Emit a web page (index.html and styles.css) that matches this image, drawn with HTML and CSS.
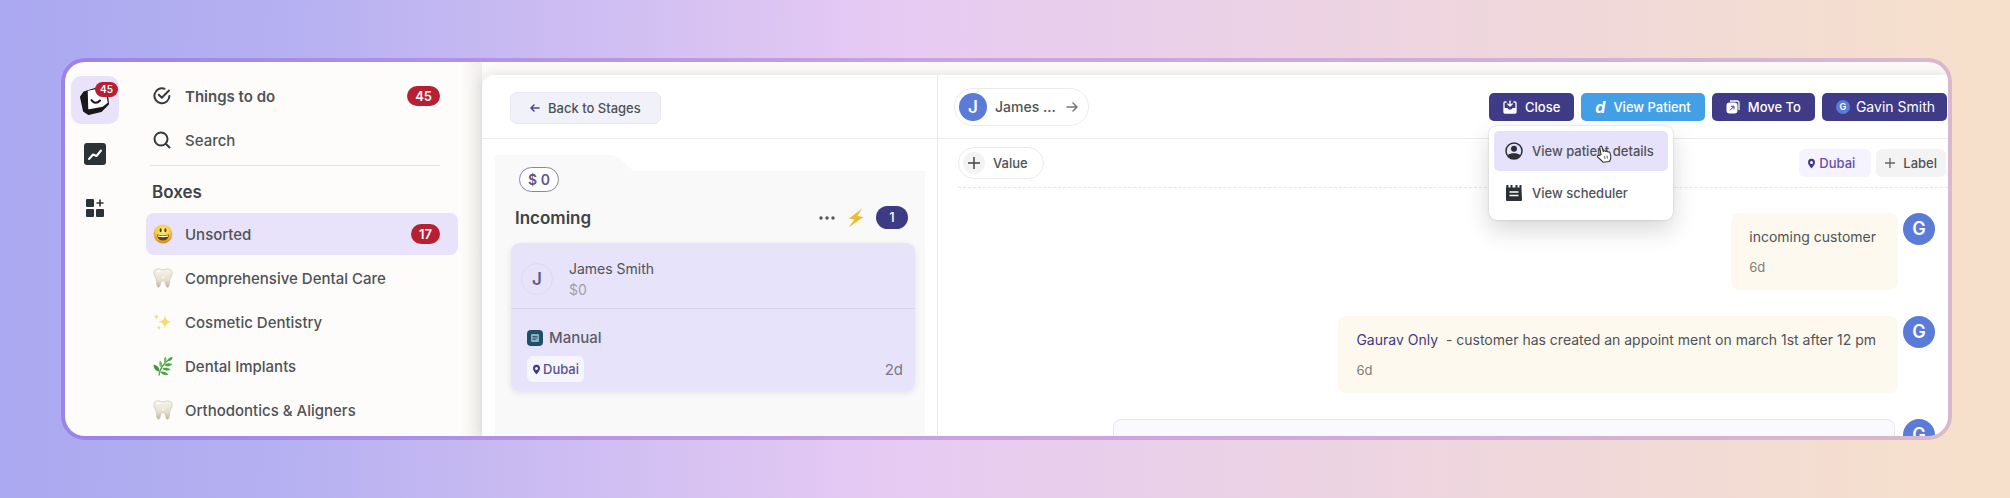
FILE: index.html
```html
<!DOCTYPE html>
<html lang="en">
<head>
  <meta charset="UTF-8">
  <meta name="viewport" content="width=device-width, initial-scale=1.0">
  <title>Inbox - Incoming</title>
  <link rel="stylesheet" href="styles.css">
</head>
<body>
  <svg class="sprite" aria-hidden="true">
    <defs>
      <radialGradient id="g-smile" cx="50%" cy="35%" r="65%">
        <stop offset="0" stop-color="#fff07a"/><stop offset=".6" stop-color="#f6c945"/><stop offset="1" stop-color="#c98a1c"/>
      </radialGradient>
      <linearGradient id="g-tooth" x1="0" y1="0" x2="0" y2="1">
        <stop offset="0" stop-color="#f7f4ec"/><stop offset=".6" stop-color="#e6e0d2"/><stop offset="1" stop-color="#bfb29c"/>
      </linearGradient>
    </defs>
    <symbol id="smile" viewBox="0 0 20 20">
      <circle cx="10" cy="10" r="9.4" fill="url(#g-smile)"/>
      <ellipse cx="7.6" cy="6.2" rx="1" ry="2" fill="#4a3410"/>
      <ellipse cx="12.4" cy="6.2" rx="1" ry="2" fill="#4a3410"/>
      <path d="M3.800 10.600q6.200 1.400 12.400 0q-.8 6-6.200 6t-6.200-6z" fill="#6b3f12"/>
      <path d="M4.600 11.300q5.400 1 10.800 0l-.6 1.500q-4.800.8-9.600 0z" fill="#fff"/>
    </symbol>
    <symbol id="tooth" viewBox="0 0 20 20">
      <path d="M5.200.8C2.200.8.6 3 .9 5.700c.3 2.200 1.700 3.500 2.200 5.700.5 2.500.4 7.900 2.400 7.900 2.200 0 1.400-6.700 4.500-6.700s2.300 6.700 4.500 6.700c2 0 1.900-5.400 2.400-7.900.5-2.200 1.900-3.500 2.200-5.700.3-2.700-1.300-4.900-4.300-4.900-2 0-3 1-4.800 1S7.200.8 5.200.8z" fill="url(#g-tooth)" stroke="#cfc5b2" stroke-width=".7"/>
      <path d="M4 3.500c1.300-1 2.800-.6 3.600.2M9 9.500h2" fill="none" stroke="#fff" stroke-width="1.200"/>
    </symbol>
    <symbol id="sparkles" viewBox="0 0 20 20">
      <path d="M12 3c.8 4.500 2 5.900 6.500 6.900-4.500 1-5.700 2.400-6.500 6.900-.8-4.500-2-5.900-6.500-6.900C10 8.900 11.200 7.500 12 3z" fill="#f5dc72"/>
      <path d="M3.400 1.500c.4 2.200.9 2.800 2.900 3.300-2 .5-2.500 1.100-2.900 3.300C3 5.900 2.500 5.300.5 4.800c2-.5 2.500-1.100 2.900-3.300zM6 13c.3 1.900.8 2.400 2.700 2.800-1.900.4-2.400.9-2.700 2.800-.3-1.900-.8-2.400-2.700-2.800C5.200 15.400 5.700 14.900 6 13z" fill="#f0dc98"/>
    </symbol>
    <symbol id="herb" viewBox="0 0 20 20">
      <path d="M6 19.500C6.500 14 10 8 16 3.500" fill="none" stroke="#4f9e46" stroke-width="1.300"/>
      <path d="M6.300 15.500C2.500 15.500.8 12.500.6 8.600 4.300 9.500 6.700 11.800 6.300 15.500z" fill="#3f9440"/>
      <path d="M8.300 11.500C6 10 5.600 7.500 7 4.500c2.300 1.800 3 4.500 1.300 7zM12 7c-1.600-1.600-1.500-4 .3-6.500C14 2.600 14 5 12 7z" fill="#6fbf5d"/>
      <path d="M14.300 5C15 2.400 17 1.200 19.700.8c-.2 2.800-2 4.700-5.400 4.200zM11.500 9.300c1.500-2 4.300-2.500 7.800-1.400-1.800 2.600-5 3.300-7.800 1.400zM9.300 12.500c2-1.300 5-.9 8.400.7-2.500 1.900-6 1.900-8.400-.7zM7.500 16c2.500-1 5.500-.2 8 2.500-3.200 1.200-6.500.5-8-2.500z" fill="#49a548"/>
    </symbol>
    <symbol id="pin" viewBox="0 0 12 14">
      <path d="M6 .8a4.600 4.600 0 0 1 4.600 4.700C10.600 8.700 6 13.300 6 13.300S1.400 8.700 1.400 5.500A4.600 4.600 0 0 1 6 .8zm0 2.700a2 2 0 1 0 0 4 2 2 0 0 0 0-4z" fill="#3d3a86" fill-rule="evenodd"/>
    </symbol>
  </svg>

  <div class="frame">
    <div class="app">
      <nav class="rail" aria-label="Apps">
        <a href="#" class="rail-item active" aria-label="Inbox">
          <svg width="30" height="30" viewBox="0 0 30 30">
            <path d="M4 7.500 20 2.500l6.500 3L28 19l-7 7L8.500 29 4 26 1 12z" fill="#17191b" stroke="#17191b" stroke-width="2" stroke-linejoin="round"/>
            <path d="M8.500 6.500 24 3l3 14.500-4.500 3.500-13.500 2.500z" fill="#fff" stroke="#fff" stroke-width="1.500" stroke-linejoin="round"/>
            <path d="M11.500 15c2 3.600 6 3.400 8.500.5" fill="none" stroke="#17191b" stroke-width="2" stroke-linecap="round"/>
          </svg>
          <span class="badge small">45</span>
        </a>
        <a href="#" class="rail-item" aria-label="Reports">
          <svg width="22" height="22" viewBox="0 0 22 22">
            <rect width="22" height="22" rx="3" fill="#2b3336"/>
            <path d="M5 16l4-4.500 3.500 1.500L17 7.500" fill="none" stroke="#fff" stroke-width="2" stroke-linecap="round" stroke-linejoin="round"/>
          </svg>
        </a>
        <a href="#" class="rail-item" aria-label="Add app">
          <svg width="20" height="20" viewBox="0 0 20 20" fill="#2b3336">
            <rect x="1" y="1" width="8" height="8" rx="1"/>
            <rect x="1" y="11" width="8" height="8" rx="1"/>
            <rect x="11" y="11" width="8" height="8" rx="1"/>
            <path d="M14.200 1.500h1.600v2.700h2.700v1.600h-2.700v2.700h-1.600V5.800h-2.700V4.200h2.700z"/>
          </svg>
        </a>
      </nav>

      <aside class="sidebar">
        <a href="#" class="side-link strong">
          <svg width="18" height="18" viewBox="0 0 18 18" fill="none" stroke="#343a3e" stroke-width="2" stroke-linecap="round" stroke-linejoin="round">
            <path d="M11.500 1.700A7.500 7.500 0 1 0 16.400 9M5.800 7.800l3 3L16 3.500"/>
          </svg>
          <span>Things to do</span>
          <span class="badge">45</span>
        </a>
        <a href="#" class="side-link">
          <svg width="18" height="18" viewBox="0 0 18 18" fill="none" stroke="#343a3e" stroke-width="2" stroke-linecap="round">
            <circle cx="8" cy="8" r="6.500"/><path d="M13 13l3.500 3.500"/>
          </svg>
          <span>Search</span>
        </a>
        <hr>
        <h2>Boxes</h2>
        <a href="#" class="side-link box active">
          <svg width="20" height="20"><use href="#smile"/></svg>
          <span>Unsorted</span>
          <span class="badge">17</span>
        </a>
        <a href="#" class="side-link box">
          <svg width="20" height="20"><use href="#tooth"/></svg>
          <span>Comprehensive Dental Care</span>
        </a>
        <a href="#" class="side-link box">
          <svg width="20" height="20"><use href="#sparkles"/></svg>
          <span>Cosmetic Dentistry</span>
        </a>
        <a href="#" class="side-link box">
          <svg width="20" height="20"><use href="#herb"/></svg>
          <span>Dental Implants</span>
        </a>
        <a href="#" class="side-link box">
          <svg width="20" height="20"><use href="#tooth"/></svg>
          <span>Orthodontics &amp; Aligners</span>
        </a>
      </aside>

      <main class="main">
        <section class="stages">
          <header class="bar">
            <button type="button" class="back">
              <svg width="10" height="10" viewBox="0 0 10 10" fill="none" stroke="#4a4790" stroke-width="1.500" stroke-linecap="round" stroke-linejoin="round"><path d="M9 5H1M4 2L1 5l3 3"/></svg>
              Back to Stages
            </button>
          </header>
          <div class="folder">
            <span class="amount">$ 0</span>
            <div class="stage-head">
              <h2>Incoming</h2>
              <button type="button" class="icon-btn" aria-label="More">
                <svg width="18" height="6" viewBox="0 0 18 6" fill="#555"><circle cx="3" cy="3" r="1.700"/><circle cx="9" cy="3" r="1.700"/><circle cx="15" cy="3" r="1.700"/></svg>
              </button>
              <svg width="16" height="20" viewBox="0 0 16 20"><path d="M14 .5 1 10.500l5.500 1L.5 19.500l15-10.500L9.500 8z" fill="#ecbb35"/></svg>
              <span class="count">1</span>
            </div>
            <article class="card">
              <div class="card-top">
                <span class="initial">J</span>
                <div>
                  <div class="name">James Smith</div>
                  <div class="money">$0</div>
                </div>
              </div>
              <div class="card-body">
                <div class="source">
                  <svg width="16" height="16" viewBox="0 0 16 16">
                    <rect width="16" height="16" rx="4" fill="#1f5068"/>
                    <rect x="4" y="4" width="8" height="8" rx="1" fill="#8fb0be"/>
                    <path d="M5.500 6.500h5M5.500 8h5M5.500 9.500h3" stroke="#1f5068" stroke-width=".8"/>
                  </svg>
                  Manual
                </div>
                <div class="card-foot">
                  <span class="tag"><svg width="9" height="11"><use href="#pin"/></svg>Dubai</span>
                  <span class="age">2d</span>
                </div>
              </div>
            </article>
          </div>
        </section>

        <section class="chat">
          <header class="bar">
            <button type="button" class="person">
              <span class="avatar">J</span>
              <span>James ...</span>
              <svg width="12" height="12" viewBox="0 0 12 12" fill="none" stroke="#777" stroke-width="1.500" stroke-linecap="round" stroke-linejoin="round"><path d="M1 6h10M7 2l4 4-4 4"/></svg>
            </button>
            <div class="actions">
              <div class="close-wrap">
                <button type="button" class="btn close">
                  <svg width="14" height="14" viewBox="0 0 14 14" fill="none">
                    <path d="M3.500 2H2a1 1 0 0 0-1 1v9a1 1 0 0 0 1 1h10a1 1 0 0 0 1-1V3a1 1 0 0 0-1-1h-1.500" stroke="#fff" stroke-width="1.300"/>
                    <path d="M1 8h3.500c.5 2 4.500 2 5 0H13v5H1z" fill="#fff"/>
                    <path d="M7 .8v5M4.800 4 7 6l2.200-2" stroke="#fff" stroke-width="1.300" stroke-linecap="round" stroke-linejoin="round"/>
                  </svg>
                  Close
                </button>
                <div class="menu">
                  <button type="button" class="menu-item active">
                    <svg width="18" height="18" viewBox="0 0 18 18">
                      <circle cx="9" cy="9" r="8" fill="none" stroke="#2b3036" stroke-width="1.500"/>
                      <circle cx="9" cy="6.800" r="3" fill="#2b3036"/>
                      <path d="M2.800 13.200c2-2.500 10.400-2.500 12.400 0C14 15.700 11.700 17 9 17s-5-1.300-6.200-3.800z" fill="#2b3036"/>
                    </svg>
                    View patient details
                  </button>
                  <button type="button" class="menu-item">
                    <svg width="18" height="18" viewBox="0 0 18 18">
                      <path d="M1.500 1h2v2.500h2V1h2v2.500h3V1h2v2.500h2V1h2v3.500L17 16a1 1 0 0 1-1 1H2a1 1 0 0 1-1-1V4.500z" fill="#2b3036"/>
                      <path d="M4.500 8h9M4.500 11.500h9" stroke="#fff" stroke-width="1.400"/>
                    </svg>
                    View scheduler
                  </button>
                  <svg class="pointer" width="16" height="18" viewBox="0 0 16 18">
                    <path d="M5 9.500 3.800 2.800C3.500 1 5.600.5 6.100 2.300L7.300 6.500c.8-1 2-.8 2.400 0 .8-.6 1.900-.4 2.200.5.900-.4 1.900.1 2.100 1l.8 3.300c.4 2-.6 3.300-1.300 5.200L7 17.300c-1-2-3.400-3.300-5.300-5.200-.9-1 .4-2.200 1.500-1.600z" fill="#fff" stroke="#333" stroke-width="1.100" stroke-linejoin="round"/>
                    <path d="M8.500 11l.5 3M11 10.500l.4 3" stroke="#333" stroke-width=".8"/>
                  </svg>
                </div>
              </div>
              <button type="button" class="btn view"><i>d</i>View Patient</button>
              <button type="button" class="btn move">
                <svg width="14" height="14" viewBox="0 0 14 14">
                  <path d="M4.500 1H11a2 2 0 0 1 2 2v6.500" fill="none" stroke="#fff" stroke-width="1.300" stroke-linecap="round"/>
                  <rect x=".5" y="2.500" width="11" height="11" rx="3" fill="#fff"/>
                  <path d="M4.300 10 7.500 6.800M5.300 6.300h2.700v2.700" fill="none" stroke="#3d3a86" stroke-width="1" stroke-linecap="round"/>
                </svg>
                Move To
              </button>
              <button type="button" class="btn user"><span class="mini">G</span>Gavin Smith</button>
            </div>
          </header>

          <div class="toolbar">
            <button type="button" class="value">
              <span class="plus"><svg width="12" height="12" viewBox="0 0 12 12" stroke="#444" stroke-width="1.500"><path d="M6 0v12M0 6h12"/></svg></span>
              Value
            </button>
            <div class="labels">
              <span class="label dubai"><svg width="9" height="11"><use href="#pin"/></svg>Dubai</span>
              <button type="button" class="label add">
                <svg width="10" height="10" viewBox="0 0 10 10" stroke="#666" stroke-width="1.300"><path d="M5 0v10M0 5h10"/></svg>
                Label
              </button>
            </div>
          </div>

          <div class="messages">
            <div class="message">
              <div class="bubble">
                <p>incoming customer</p>
                <time>6d</time>
              </div>
              <span class="avatar big">G</span>
            </div>
            <div class="message">
              <div class="bubble">
                <p><a href="#">Gaurav Only</a>&nbsp; - customer has created an appoint ment on march 1st after 12 pm</p>
                <time>6d</time>
              </div>
              <span class="avatar big">G</span>
            </div>
            <div class="message">
              <div class="bubble mail"></div>
              <span class="avatar big">G</span>
            </div>
          </div>
        </section>
      </main>
    </div>
  </div>
</body>
</html>
```
FILE: styles.css
```css
* {
  box-sizing: border-box;
}
body {
  margin: 0;
  height: 100vh;
  padding: 58px 58px 58px 61px;
  overflow: hidden;
  background: linear-gradient(91deg, #aaa8f0 0%, #b5b0f1 14%, #e6caf3 44%, #f6e0cb 98%);
  font-family: Inter, "Liberation Sans", sans-serif;
  font-size: 15px;
  color: #4f5257;
}
a {
  color: inherit;
  text-decoration: none;
}
button {
  margin: 0;
  padding: 0;
  border: none;
  background: none;
  font: inherit;
  color: inherit;
  white-space: nowrap;
}
svg {
  display: block;
  flex: none;
}
h2,
p {
  margin: 0;
}
h2 {
  font-size: 17px;
  font-weight: 600;
  color: #3f4247;
}
.sprite {
  position: absolute;
  width: 0;
  height: 0;
}
.frame {
  height: 100%;
  padding: 4px;
  border-radius: 24px;
  background: linear-gradient(90deg, #9a84e8 0%, #c9a0e2 45%, #dab8cc 100%);
}
.app {
  display: flex;
  height: 100%;
  overflow: hidden;
  border-radius: 20px;
  background: #fdfcfb;
}

/* icon rail */
.rail {
  flex: none;
  width: 60px;
  padding: 14px 6px;
}
.rail-item {
  position: relative;
  display: flex;
  align-items: center;
  justify-content: center;
  width: 48px;
  height: 48px;
  margin-bottom: 6px;
  border-radius: 10px;
}
.rail-item.active {
  background: #e8e3fb;
}
.badge {
  margin-left: auto;
  padding: 0 8px;
  border-radius: 10px;
  background: #b71f33;
  color: #fff;
  font-size: 13px;
  font-weight: 600;
  line-height: 20px;
}
.badge.small {
  position: absolute;
  top: 6px;
  right: 1px;
  padding: 0 5px;
  border-radius: 8px;
  font-size: 10px;
  line-height: 15px;
}

/* sidebar */
.sidebar {
  flex: none;
  width: 357px;
  padding: 13px 24px 0 21px;
  background: linear-gradient(90deg, transparent 335px, #f1efed 357px);
}
.side-link {
  display: flex;
  align-items: center;
  gap: 14px;
  height: 42px;
  margin-bottom: 2px;
  padding: 0 18px 0 7px;
  border-radius: 8px;
  font-weight: 500;
  white-space: nowrap;
}
.side-link.strong {
  font-weight: 600;
}
.side-link.box {
  gap: 12px;
}
.side-link.active {
  background: #e8e3fb;
}
.sidebar hr {
  height: 1px;
  margin: 4px 18px 0 4px;
  border: none;
  background: #e4e3e2;
}
.sidebar h2 {
  padding: 8px 0 2px 6px;
  line-height: 37px;
}

/* main panel */
.main {
  display: flex;
  flex: 1;
  min-width: 0;
  margin-top: 13px;
  border-top-left-radius: 12px;
  background: #fff;
  box-shadow: 0 0 14px rgba(60, 50, 40, .16);
}
.stages {
  display: flex;
  flex: none;
  flex-direction: column;
  width: 456px;
  border-right: 1px solid #ebebeb;
}
.bar {
  display: flex;
  flex: none;
  align-items: center;
  height: 64px;
  border-bottom: 1px solid #ebebeb;
}
.stages .bar {
  padding: 2px 28px 0;
}
.back {
  display: flex;
  align-items: center;
  gap: 8px;
  height: 32px;
  padding: 0 19px;
  border: 1px solid #e9e8f6;
  border-radius: 7px;
  background: #f1f1f9;
  font-size: 13px;
  font-weight: 500;
}
.folder {
  flex: 1;
  margin: 16px 12px 0 13px;
  padding: 12px 10px 0 16px;
  background: #f9f9f9;
  clip-path: polygon(0 0, 118px 0, 124px 3px, 139px 16px, 100% 16px, 100% 100%, 0 100%);
}
.amount {
  display: block;
  width: 40px;
  margin-left: 8px;
  border: 1px solid #8884ae;
  border-radius: 13px;
  background: #fff;
  color: #5d5790;
  font-size: 14px;
  font-weight: 600;
  line-height: 23px;
  text-align: center;
}
.stage-head {
  display: flex;
  align-items: center;
  gap: 12px;
  height: 51px;
  padding: 0 7px 0 4px;
}
.stage-head h2 {
  margin-right: auto;
}
.count {
  width: 32px;
  border-radius: 12px;
  background: #3d3a86;
  color: #fff;
  font-size: 13px;
  font-weight: 500;
  line-height: 23px;
  text-align: center;
}
.card {
  border-radius: 9px;
  background: #e7e3fb;
  box-shadow: 0 2px 6px rgba(60, 50, 110, .12);
}
.card-top {
  display: flex;
  align-items: center;
  gap: 16px;
  height: 66px;
  padding: 6px 10px 0;
  border-bottom: 1px solid #dad6ee;
}
.initial {
  width: 32px;
  border: 1px solid #dedaf2;
  border-radius: 50%;
  color: #5f5a88;
  font-size: 17px;
  font-weight: 600;
  line-height: 30px;
  text-align: center;
}
.name,
.money {
  font-size: 14px;
  line-height: 21px;
}
.money {
  color: #a19fae;
}
.card-body {
  padding: 19px 12px 9px 16px;
}
.source {
  display: flex;
  align-items: center;
  gap: 6px;
  line-height: 20px;
  font-weight: 500;
  color: #5c5c68;
}
.card-foot {
  display: flex;
  align-items: center;
  justify-content: space-between;
  margin-top: 8px;
}
.tag {
  display: flex;
  align-items: center;
  gap: 2px;
  height: 26px;
  padding: 0 5px;
  border-radius: 6px;
  background: #f6f4fe;
  color: #57538c;
  font-size: 13px;
  font-weight: 500;
}
.age {
  color: #7b7989;
}

/* conversation */
.chat {
  display: flex;
  flex: 1;
  flex-direction: column;
  min-width: 0;
}
.chat .bar {
  justify-content: space-between;
  padding: 0 1px 0 16px;
}
.person {
  display: flex;
  align-items: center;
  gap: 8px;
  height: 38px;
  padding: 0 10px 0 4px;
  border: 1px solid #ebebeb;
  border-radius: 19px;
  font-size: 14px;
  font-weight: 500;
}
.person svg {
  margin-left: 2px;
}
.avatar {
  flex: none;
  width: 28px;
  border-radius: 50%;
  background: #5a7bd8;
  color: #fff;
  font-size: 17px;
  font-weight: 600;
  line-height: 28px;
  text-align: center;
}
.avatar.big {
  width: 32px;
  height: 32px;
  font-size: 18px;
  line-height: 32px;
}
.actions {
  display: flex;
  gap: 7px;
}
.close-wrap {
  position: relative;
}
.btn {
  display: flex;
  align-items: center;
  gap: 8px;
  height: 28px;
  padding: 0 14px;
  border-radius: 5px;
  background: #3f3b87;
  color: #fff;
  font-size: 13px;
  font-weight: 500;
}
.btn.view {
  background: #44a0e6;
}
.btn i {
  font-size: 16px;
  font-weight: 700;
}
.btn.user {
  gap: 6px;
  padding: 0 12px 0 14px;
  font-size: 14px;
  font-weight: 400;
}
.mini {
  width: 14px;
  border-radius: 50%;
  background: #5a7bd8;
  font-size: 9px;
  font-weight: 600;
  line-height: 14px;
  text-align: center;
}
.menu {
  position: absolute;
  z-index: 5;
  top: 33px;
  left: 0;
  width: 184px;
  padding: 5px;
  border-radius: 8px;
  background: #fff;
  box-shadow: 0 0 2px rgba(0, 0, 0, .2), 0 10px 24px rgba(0, 0, 0, .16);
}
.menu-item {
  display: flex;
  align-items: center;
  gap: 9px;
  width: 100%;
  height: 40px;
  margin-bottom: 2px;
  padding-left: 11px;
  border-radius: 5px;
  font-size: 13px;
  font-weight: 500;
}
.menu-item.active {
  background: #e7e2fb;
}
.pointer {
  position: absolute;
  top: 19px;
  left: 107px;
}
.toolbar {
  display: flex;
  flex: none;
  align-items: center;
  justify-content: space-between;
  height: 49px;
  margin-left: 20px;
  padding-right: 2px;
  border-bottom: 1px dashed #e6e6e6;
}
.value {
  display: flex;
  align-items: center;
  gap: 8px;
  height: 32px;
  padding: 0 15px 0 4px;
  border: 1px solid #ebebeb;
  border-radius: 16px;
  font-size: 13px;
  font-weight: 500;
}
.plus {
  display: flex;
  align-items: center;
  justify-content: center;
  width: 22px;
  height: 22px;
  border-radius: 50%;
  background: #f3f3f3;
}
.labels {
  display: flex;
  gap: 5px;
}
.label {
  display: flex;
  align-items: center;
  gap: 3px;
  height: 28px;
  border-radius: 6px;
  font-size: 13px;
  font-weight: 500;
}
.dubai {
  padding: 0 16px 0 8px;
  background: #f5f3fe;
  color: #6450a8;
}
.add {
  gap: 8px;
  padding: 0 9px;
  background: #f3f3f3;
}
.messages {
  padding: 25px 13px 0 20px;
}
.message {
  display: flex;
  justify-content: flex-end;
  gap: 5px;
  margin-bottom: 26px;
}
.bubble {
  padding: 12px 22px 13px 18px;
  border-radius: 8px;
  background: #fdf9ee;
  font-size: 14px;
  line-height: 24px;
}
.bubble a {
  color: #413a80;
}
.bubble time {
  display: block;
  margin-top: 8px;
  color: #7d7d7a;
  font-size: 13px;
  line-height: 20px;
}
.bubble.mail {
  width: 80%;
  height: 77px;
  margin-right: 3px;
  border: 1px solid #e6e6ec;
  background: #f9f9fe;
}
```
